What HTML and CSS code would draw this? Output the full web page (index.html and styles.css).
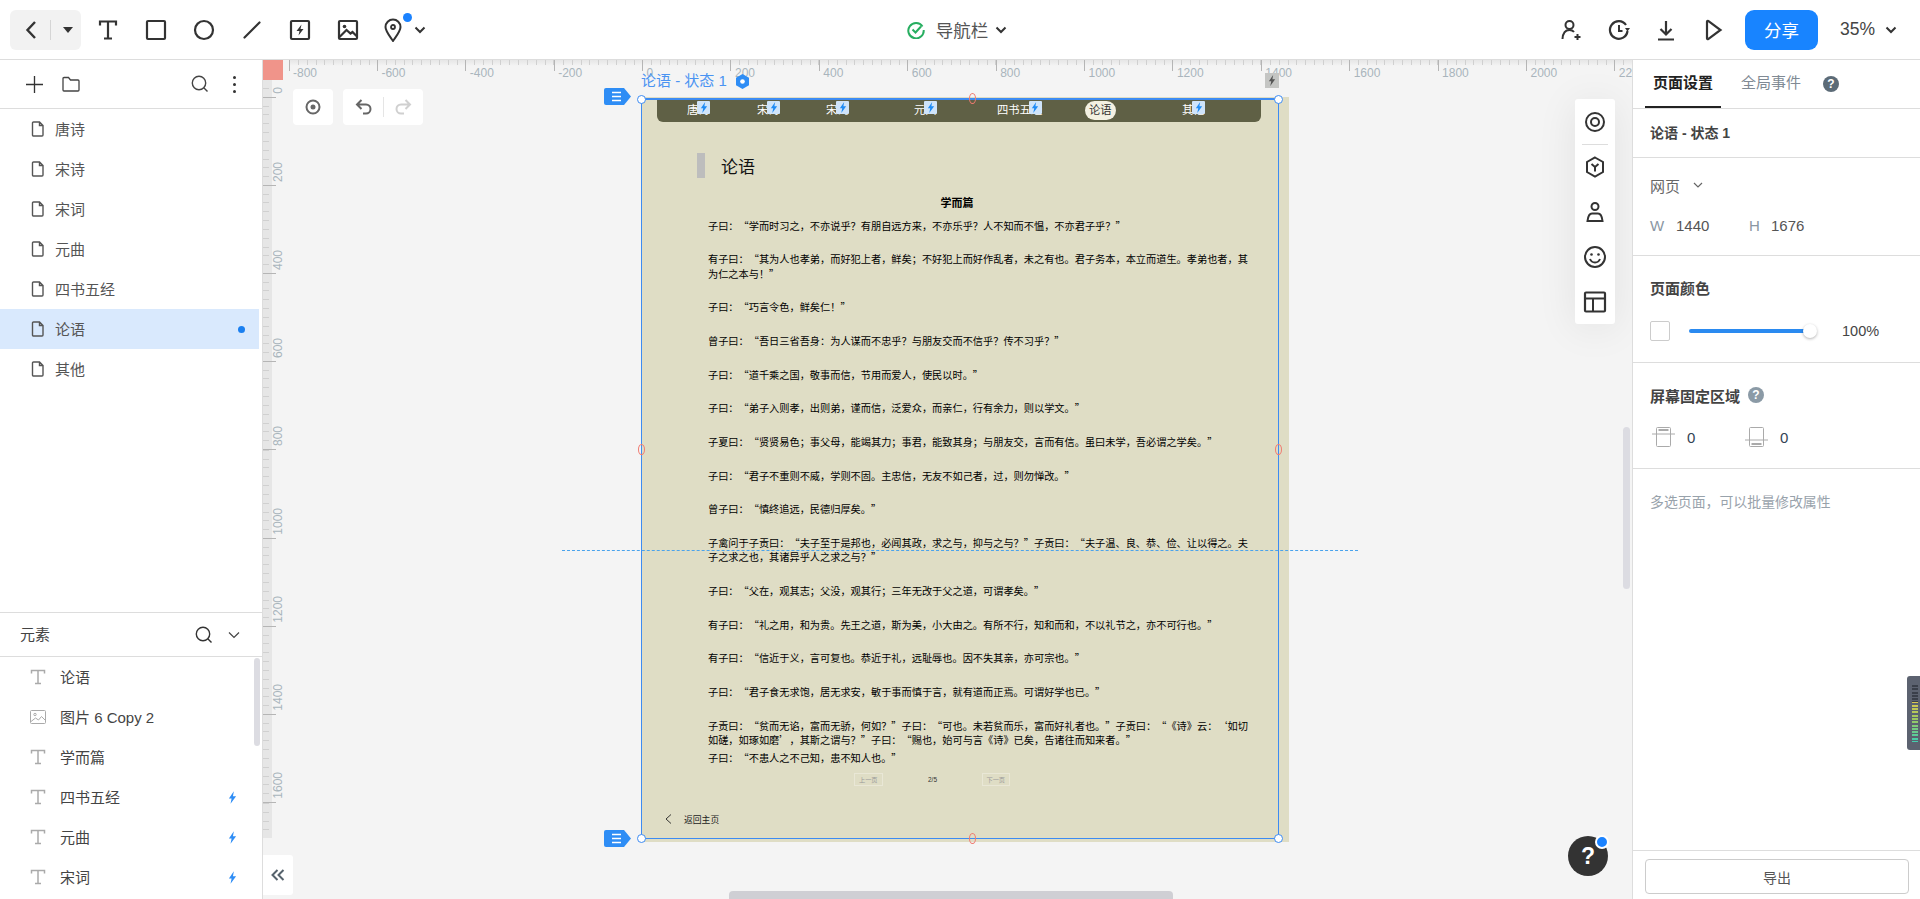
FILE: index.html
```html
<!DOCTYPE html>
<html lang="zh-CN">
<head>
    <meta charset="UTF-8">
    <meta name="viewport" content="width=device-width, initial-scale=1.0">
    <title>论语 - 状态 1</title>
    <link rel="stylesheet" href="styles.css">
</head>
<body>

<svg class="icon-defs" aria-hidden="true">
    <symbol id="i-file" viewBox="0 0 14 16"><path d="M2.5 1h6l3.500 3.500V14a1 1 0 0 1-1 1h-8.500a1 1 0 0 1-1-1V2a1 1 0 0 1 1-1zM8.500 1v3.500H12" fill="none" stroke="currentColor" stroke-width="1.400"/></symbol>
    <symbol id="i-t" viewBox="0 0 16 16"><path d="M1.500 4.500V1.500h13v3M8 1.500v13M5 14.500h6" fill="none" stroke="currentColor" stroke-width="1.500"/></symbol>
    <symbol id="i-bolt" viewBox="0 0 10 14"><path d="M6.500 0 1 8h3L2.800 14 9 5.500H5.500z" fill="currentColor"/></symbol>
    <symbol id="i-search" viewBox="0 0 18 18"><circle cx="8" cy="8" r="6.700" fill="none" stroke="currentColor" stroke-width="1.400"/><path d="m12.800 12.800 3.700 3.700" stroke="currentColor" stroke-width="1.400"/></symbol>
    <symbol id="i-chev" viewBox="0 0 12 8"><path d="m1.500 1.500 4.500 4.500 4.500-4.500" fill="none" stroke="currentColor" stroke-width="2"/></symbol>
    <symbol id="i-tag" viewBox="0 0 27 17"><path d="M2 0h18l7 8.500-7 8.500H2a2 2 0 0 1-2-2V2a2 2 0 0 1 2-2z" fill="#2e8df5"/><path d="M8 4.500h9M8 8.500h9M8 12.500h9" stroke="#fff" stroke-width="1.500"/></symbol>
</svg>

<!-- Top toolbar -->
<header class="topbar">
    <div class="topbar-left">
        <div class="back-group">
            <svg class="back-arrow" viewBox="0 0 12 20"><path d="M10 2 2.500 10l7.500 8" fill="none" stroke="#333" stroke-width="2.400"/></svg>
            <span class="back-sep"></span>
            <span class="back-caret"></span>
        </div>
        <span class="tool"><svg viewBox="0 0 24 24"><path d="M4 7.500V3.500h16v4M12 3.500v17M8 20.500h8" fill="none" stroke="#333" stroke-width="2.200"/></svg></span>
        <span class="tool"><svg viewBox="0 0 24 24"><rect x="3" y="3" width="18" height="18" rx="1" fill="none" stroke="#333" stroke-width="2.200"/></svg></span>
        <span class="tool"><svg viewBox="0 0 24 24"><circle cx="12" cy="12" r="9" fill="none" stroke="#333" stroke-width="2.200"/></svg></span>
        <span class="tool"><svg viewBox="0 0 24 24"><path d="M4.500 19.500 19.500 4.500" fill="none" stroke="#333" stroke-width="2.200" stroke-linecap="round"/></svg></span>
        <span class="tool"><svg viewBox="0 0 24 24"><rect x="3" y="3" width="18" height="18" rx="1" fill="none" stroke="#333" stroke-width="2.200"/><path d="M13.500 6.500 8.500 13h3l-1 4.500 5-6.500h-3z" fill="#333"/></svg></span>
        <span class="tool"><svg viewBox="0 0 24 24"><rect x="3" y="3" width="18" height="18" rx="1" fill="none" stroke="#333" stroke-width="2.200"/><circle cx="8.500" cy="8.500" r="1.800" fill="#333"/><path d="m3.500 19 7-7 4 3.500 2-1.500 4 4" fill="none" stroke="#333" stroke-width="2.200"/></svg></span>
        <span class="tool tool-pin">
            <svg viewBox="0 0 24 24"><path d="M12 23C7.500 16.500 4.500 13 4.500 9a7.500 7.500 0 0 1 15 0c0 4-3 7.500-7.500 14z" fill="none" stroke="#333" stroke-width="2"/><circle cx="12" cy="9" r="2" fill="none" stroke="#333" stroke-width="1.800"/></svg>
            <span class="pin-dot"></span>
        </span>
        <svg class="chev-small" viewBox="0 0 12 8"><use href="#i-chev"/></svg>
    </div>
    <div class="topbar-center">
        <svg class="status-check" viewBox="0 0 18 18"><path d="M15.500 5.500A7.700 7.700 0 1 0 16.700 9" fill="none" stroke="#27ae60" stroke-width="2"/><path d="m5.500 8.500 3 3 5.500-6" fill="none" stroke="#27ae60" stroke-width="2"/></svg>
        <span class="status-name">导航栏</span>
        <svg class="chev-small" viewBox="0 0 12 8"><use href="#i-chev"/></svg>
    </div>
    <div class="topbar-right">
        <span class="tool-r"><svg viewBox="0 0 24 24"><circle cx="10.500" cy="7" r="4" fill="none" stroke="#333" stroke-width="2"/><path d="M3.500 21c.3-5 2.500-9 7-9 2 0 3.500.7 4.500 2" fill="none" stroke="#333" stroke-width="2"/><path d="M15.500 19h6M18.500 16v6" stroke="#333" stroke-width="2"/></svg></span>
        <span class="tool-r"><svg viewBox="0 0 24 24"><path d="M20.500 13A8.800 8.800 0 1 1 19 7" fill="none" stroke="#333" stroke-width="2.200"/><path d="M12 7v6h3.500" fill="none" stroke="#333" stroke-width="2"/><path d="m23 10-2.500 3.500L18 10z" fill="#333"/></svg></span>
        <span class="tool-r"><svg viewBox="0 0 24 24"><path d="M12 3v13M6.500 11l5.500 5.500 5.500-5.500M4 21.500h16" fill="none" stroke="#333" stroke-width="2.200"/></svg></span>
        <span class="tool-r"><svg viewBox="0 0 24 24"><path d="M6 3.500v17a.8.800 0 0 0 1.200.6L19.500 12 7.200 2.900A.8.800 0 0 0 6 3.500z" fill="none" stroke="#333" stroke-width="2.200"/></svg></span>
        <button class="share-btn">分享</button>
        <span class="zoom-value">35%</span>
        <svg class="chev-small" viewBox="0 0 12 8"><use href="#i-chev"/></svg>
    </div>
</header>

<main class="workspace">

    <!-- Pages and elements -->
    <aside class="left-panel">
        <div class="panel-head">
            <svg class="head-plus" viewBox="0 0 18 18"><path d="M9 0v18M0 9h18" stroke="#333" stroke-width="1.400"/></svg>
            <svg class="head-folder" viewBox="0 0 18 16"><path d="M1 2.500a1 1 0 0 1 1-1h4.500l2 2.500H16a1 1 0 0 1 1 1v9a1 1 0 0 1-1 1H2a1 1 0 0 1-1-1z" fill="none" stroke="#444" stroke-width="1.300"/></svg>
            <svg class="head-search"><use href="#i-search"/></svg>
            <span class="head-dots"><i></i><i></i><i></i></span>
        </div>
        <ul class="page-list">
            <li class="page-row"><svg class="page-icon"><use href="#i-file"/></svg>唐诗</li>
            <li class="page-row"><svg class="page-icon"><use href="#i-file"/></svg>宋诗</li>
            <li class="page-row"><svg class="page-icon"><use href="#i-file"/></svg>宋词</li>
            <li class="page-row"><svg class="page-icon"><use href="#i-file"/></svg>元曲</li>
            <li class="page-row"><svg class="page-icon"><use href="#i-file"/></svg>四书五经</li>
            <li class="page-row is-active"><svg class="page-icon"><use href="#i-file"/></svg>论语<span class="active-dot"></span></li>
            <li class="page-row"><svg class="page-icon"><use href="#i-file"/></svg>其他</li>
        </ul>
        <div class="elements">
            <div class="elements-head">
                <span class="elements-name">元素</span>
                <svg class="el-search"><use href="#i-search"/></svg>
                <svg class="el-chev" viewBox="0 0 12 8"><path d="m1 1.500 5 5 5-5" fill="none" stroke="#444" stroke-width="1.200"/></svg>
            </div>
            <ul class="element-list">
                <li class="element-row"><svg class="el-icon"><use href="#i-t"/></svg>论语</li>
                <li class="element-row"><svg class="el-icon" viewBox="0 0 16 16"><rect x=".5" y="1.500" width="15" height="13" rx="1" fill="none" stroke="#aaa"/><circle cx="5" cy="5.500" r="1.200" fill="none" stroke="#aaa"/><path d="m1 12.500 4.500-3.500 3 2 3-3.500 4 4" fill="none" stroke="#aaa"/></svg>图片 6 Copy 2</li>
                <li class="element-row"><svg class="el-icon"><use href="#i-t"/></svg>学而篇</li>
                <li class="element-row"><svg class="el-icon"><use href="#i-t"/></svg>四书五经<svg class="el-bolt"><use href="#i-bolt"/></svg></li>
                <li class="element-row"><svg class="el-icon"><use href="#i-t"/></svg>元曲<svg class="el-bolt"><use href="#i-bolt"/></svg></li>
                <li class="element-row"><svg class="el-icon"><use href="#i-t"/></svg>宋词<svg class="el-bolt"><use href="#i-bolt"/></svg></li>
            </ul>
            <span class="element-scroll"></span>
        </div>
    </aside>

    <!-- Canvas with rulers -->
    <section class="canvas">
        <div class="ruler-top">
            <span class="ruler-corner"></span>
            <span class="rt-cell">-800</span><span class="rt-cell">-600</span><span class="rt-cell">-400</span><span class="rt-cell">-200</span>
            <span class="rt-cell">0</span><span class="rt-cell">200</span><span class="rt-cell">400</span><span class="rt-cell">600</span>
            <span class="rt-cell">800</span><span class="rt-cell">1000</span><span class="rt-cell">1200</span><span class="rt-cell">1400</span>
            <span class="rt-cell">1600</span><span class="rt-cell">1800</span><span class="rt-cell">2000</span><span class="rt-cell">22</span>
        </div>
        <div class="ruler-left">
            <span class="rl-cell rl-first"><b>0</b></span>
            <span class="rl-cell"><b>200</b></span><span class="rl-cell"><b>400</b></span><span class="rl-cell"><b>600</b></span>
            <span class="rl-cell"><b>800</b></span><span class="rl-cell"><b>1000</b></span><span class="rl-cell"><b>1200</b></span>
            <span class="rl-cell"><b>1400</b></span><span class="rl-cell"><b>1600</b></span>
            <span class="rl-cell rl-last"></span>
        </div>

        <!-- Artboard -->
        <div class="artboard">
            <nav class="site-nav">
                <span class="nav-item">唐诗<span class="nav-badge"><svg><use href="#i-bolt"/></svg></span></span>
                <span class="nav-item">宋诗<span class="nav-badge"><svg><use href="#i-bolt"/></svg></span></span>
                <span class="nav-item">宋词<span class="nav-badge"><svg><use href="#i-bolt"/></svg></span></span>
                <span class="nav-item">元曲<span class="nav-badge"><svg><use href="#i-bolt"/></svg></span></span>
                <span class="nav-item">四书五经<span class="nav-badge badge-wide"><svg><use href="#i-bolt"/></svg></span></span>
                <span class="nav-item nav-current">论语</span>
                <span class="nav-item">其他<span class="nav-badge"><svg><use href="#i-bolt"/></svg></span></span>
            </nav>
            <div class="book-head">
                <span class="book-mark"></span>
                <h1 class="book-title">论语</h1>
            </div>
            <article class="book-text">
                <h2 class="chapter-title">学而篇</h2>
                <p>子曰：“学而时习之，不亦说乎？有朋自远方来，不亦乐乎？人不知而不愠，不亦君子乎？”</p>
                <p>有子曰：“其为人也孝弟，而好犯上者，鲜矣；不好犯上而好作乱者，未之有也。君子务本，本立而道生。孝弟也者，其为仁之本与！”</p>
                <p>子曰：“巧言令色，鲜矣仁！”</p>
                <p>曾子曰：“吾日三省吾身：为人谋而不忠乎？与朋友交而不信乎？传不习乎？”</p>
                <p>子曰：“道千乘之国，敬事而信，节用而爱人，使民以时。”</p>
                <p>子曰：“弟子入则孝，出则弟，谨而信，泛爱众，而亲仁，行有余力，则以学文。”</p>
                <p>子夏曰：“贤贤易色；事父母，能竭其力；事君，能致其身；与朋友交，言而有信。虽曰未学，吾必谓之学矣。”</p>
                <p>子曰：“君子不重则不威，学则不固。主忠信，无友不如己者，过，则勿惮改。”</p>
                <p>曾子曰：“慎终追远，民德归厚矣。”</p>
                <p>子禽问于子贡曰：“夫子至于是邦也，必闻其政，求之与，抑与之与？”子贡曰：“夫子温、良、恭、俭、让以得之。夫子之求之也，其诸异乎人之求之与？”</p>
                <p>子曰：“父在，观其志；父没，观其行；三年无改于父之道，可谓孝矣。”</p>
                <p>有子曰：“礼之用，和为贵。先王之道，斯为美，小大由之。有所不行，知和而和，不以礼节之，亦不可行也。”</p>
                <p>有子曰：“信近于义，言可复也。恭近于礼，远耻辱也。因不失其亲，亦可宗也。”</p>
                <p>子曰：“君子食无求饱，居无求安，敏于事而慎于言，就有道而正焉。可谓好学也已。”</p>
                <p class="tight">子贡曰：“贫而无谄，富而无骄，何如？”子曰：“可也。未若贫而乐，富而好礼者也。”子贡曰：“《诗》云：‘如切如磋，如琢如磨’，其斯之谓与？”子曰：“赐也，始可与言《诗》已矣，告诸往而知来者。”</p>
                <p class="tight">子曰：“不患人之不己知，患不知人也。”</p>
            </article>
            <div class="pager">
                <span class="pager-btn">上一页</span>
                <span class="pager-count">2/5</span>
                <span class="pager-btn">下一页</span>
            </div>
            <div class="back-home">
                <svg viewBox="0 0 7 10"><path d="M6 .5 1 5l5 4.500" fill="none" stroke="#222" stroke-width=".9"/></svg>
                <span>返回主页</span>
            </div>
        </div>

        <!-- Selection frame over the artboard -->
        <div class="frame-label">论语 - 状态 1
            <svg viewBox="0 0 14 16"><path d="M7 0 14 4v8l-7 4-7-4V4z" fill="#2e8df5"/><circle cx="7" cy="8" r="2.500" fill="#fff"/></svg>
        </div>
        <span class="frame-bolt"><svg><use href="#i-bolt"/></svg></span>
        <svg class="frame-tag tag-top"><use href="#i-tag"/></svg>
        <svg class="frame-tag tag-bottom"><use href="#i-tag"/></svg>
        <div class="frame">
            <i class="handle h-tl"></i><i class="handle h-tr"></i><i class="handle h-bl"></i><i class="handle h-br"></i>
            <i class="mid m-top"></i><i class="mid m-bottom"></i><i class="mid m-left"></i><i class="mid m-right"></i>
        </div>
        <div class="guide-line"></div>

        <!-- Floating tools -->
        <div class="float-btn float-target">
            <svg viewBox="0 0 16 16"><circle cx="8" cy="8" r="6.500" fill="none" stroke="#666" stroke-width="2"/><circle cx="8" cy="8" r="2.500" fill="#666"/></svg>
        </div>
        <div class="float-btn float-history">
            <svg viewBox="0 0 18 18"><path d="M6.500 2 2 6.500 6.500 11M2.500 6.500H11a4.500 4.500 0 0 1 0 9H8" fill="none" stroke="#666" stroke-width="2"/></svg>
            <span class="history-sep"></span>
            <svg viewBox="0 0 18 18"><path d="M11.500 2 16 6.500 11.500 11M15.500 6.500H7a4.500 4.500 0 0 0 0 9h3" fill="none" stroke="#d0d0d0" stroke-width="2"/></svg>
        </div>
        <div class="side-tools">
            <svg viewBox="0 0 24 24"><circle cx="12" cy="12" r="9" fill="none" stroke="#333" stroke-width="2"/><circle cx="12" cy="12" r="4" fill="none" stroke="#333" stroke-width="2"/></svg>
            <span class="side-sep"></span>
            <svg viewBox="0 0 24 24"><path d="M12 2.500 20 7v10l-8 4.500L4 17V7z" fill="none" stroke="#333" stroke-width="2"/><path d="m8.500 9 3.500 3 3.500-3M12 12v4.500" fill="none" stroke="#333" stroke-width="2"/></svg>
            <svg viewBox="0 0 24 24"><circle cx="12" cy="6.500" r="3.500" fill="none" stroke="#333" stroke-width="2"/><path d="M4.500 21c.5-4.500 2-7.500 4.500-7.500h6c2.500 0 4 3 4.500 7.500z" fill="none" stroke="#333" stroke-width="2"/></svg>
            <svg viewBox="0 0 24 24"><circle cx="12" cy="12" r="10" fill="none" stroke="#333" stroke-width="2"/><circle cx="8.500" cy="9.500" r="1.300" fill="#333"/><circle cx="15.500" cy="9.500" r="1.300" fill="#333"/><path d="M7 14c1 2.500 3 3.500 5 3.500s4-1 5-3.500" fill="none" stroke="#333" stroke-width="2"/></svg>
            <svg viewBox="0 0 24 24"><rect x="2" y="2.500" width="20" height="19" rx="1" fill="none" stroke="#333" stroke-width="2.200"/><path d="M2 8.500h20M10 8.500V21" fill="none" stroke="#333" stroke-width="2"/></svg>
        </div>

        <span class="scroll-v"></span>
        <span class="scroll-h"></span>
        <div class="help-btn">?<span class="help-dot"></span></div>
        <button class="collapse-btn"><svg viewBox="0 0 14 12"><path d="M6.500 1 1.500 6l5 5M12.500 1l-5 5 5 5" fill="none" stroke="#56626c" stroke-width="2"/></svg></button>
    </section>

    <!-- Page settings -->
    <aside class="right-panel">
        <div class="tabs">
            <span class="tab is-on">页面设置</span>
            <span class="tab">全局事件</span>
            <span class="hint hint-dark">?</span>
        </div>
        <div class="sec sec-name">论语 - 状态 1</div>
        <div class="sec sec-size">
            <div class="page-type">网页<svg viewBox="0 0 12 8"><path d="m2 2 4 4 4-4" fill="none" stroke="#666" stroke-width="1.200"/></svg></div>
            <div class="size-row">
                <span class="size-field"><em>W</em>1440</span>
                <span class="size-field"><em class="em-h">H</em>1676</span>
            </div>
        </div>
        <div class="sec sec-color">
            <div class="sec-title">页面颜色</div>
            <div class="color-row">
                <span class="swatch"></span>
                <span class="slider"><span class="slider-thumb"></span></span>
                <span class="percent">100%</span>
            </div>
        </div>
        <div class="sec sec-fixed">
            <div class="sec-title">屏幕固定区域<span class="hint hint-light">?</span></div>
            <div class="fixed-row">
                <span class="fixed-field"><svg viewBox="0 0 23 20"><rect x="4.500" y=".5" width="14" height="19" rx="1" fill="#fff" stroke="#aaa"/><path d="M6.500 3h10" stroke="#aaa" stroke-width="2"/><path d="M0 7h23" stroke="#aaa"/></svg>0</span>
                <span class="fixed-field"><svg viewBox="0 0 23 20"><rect x="4.500" y=".5" width="14" height="19" rx="1" fill="#fff" stroke="#aaa"/><path d="M6.500 17h10" stroke="#aaa" stroke-width="2"/><path d="M0 13h23" stroke="#aaa"/></svg>0</span>
            </div>
        </div>
        <div class="multi-note">多选页面，可以批量修改属性</div>
        <div class="export-bar"><button class="export-btn">导出</button></div>
    </aside>
</main>

<div class="side-widget"><span class="meter"></span></div>

</body>
</html>
```

FILE: styles.css
```css
* {
    box-sizing: border-box;
}
html, body {
    height: 100%;
}
body {
    margin: 0;
    display: flex;
    flex-direction: column;
    overflow: hidden;
    position: relative;
    font-family: "Liberation Sans", "Noto Sans CJK SC", sans-serif;
    color: #444;
    background-color: #f4f4f4;
}
ul {
    list-style: none;
    margin: 0;
    padding: 0;
}
svg {
    display: block;
}
button {
    font-family: inherit;
    cursor: pointer;
}
.icon-defs {
    width: 0;
    height: 0;
    position: absolute;
}

/* top bar */
.topbar {
    height: 60px;
    flex: none;
    display: grid;
    grid-template-columns: 1fr auto 1fr;
    align-items: center;
    background-color: white;
    border-bottom: 1px solid #ddd;
}
.topbar-left, .topbar-center, .topbar-right {
    display: flex;
    align-items: center;
}
.topbar-left {
    padding-left: 10px;
}
.topbar-center {
    margin-right: 6px;
}
.topbar-right {
    justify-content: flex-end;
    padding-right: 23px;
}
.back-group {
    width: 71px;
    height: 40px;
    margin-right: 3px;
    display: flex;
    align-items: center;
    padding-left: 15px;
    background-color: #f2f2f2;
    border-radius: 6px;
}
.back-arrow {
    width: 12px;
    height: 20px;
}
.back-sep {
    width: 1px;
    height: 20px;
    margin: 0 12px 0 13px;
    background-color: #d5d5d5;
}
.back-caret {
    border-left: 5px solid transparent;
    border-right: 5px solid transparent;
    border-top: 6px solid #333;
}
.tool {
    width: 48px;
    display: flex;
    justify-content: center;
}
.tool svg {
    width: 24px;
    height: 24px;
}
.tool-pin {
    width: 42px;
    position: relative;
}
.pin-dot {
    position: absolute;
    top: -5px;
    left: 31px;
    width: 9px;
    height: 9px;
    border-radius: 50%;
    background-color: #1a82ff;
}
.chev-small {
    width: 12px;
    height: 8px;
    color: #333;
}
.status-check {
    width: 18px;
    height: 18px;
}
.status-name {
    margin: 0 7px 0 11px;
    font-size: 17.500px;
    color: #555;
}
.tool-r {
    width: 47.300px;
    display: flex;
    justify-content: center;
}
.tool-r svg {
    width: 24px;
    height: 24px;
}
.share-btn {
    width: 73px;
    height: 40px;
    margin: 0 22px 0 8px;
    border: none;
    border-radius: 9px;
    background-color: #1884ff;
    color: white;
    font-size: 17.500px;
}
.zoom-value {
    margin-right: 10px;
    font-size: 17.500px;
    color: #444;
}

/* main area */
.workspace {
    flex: 1;
    min-height: 0;
    display: flex;
}

/* left panel */
.left-panel {
    width: 263px;
    flex: none;
    display: flex;
    flex-direction: column;
    background-color: white;
    border-right: 1px solid #ddd;
}
.panel-head {
    height: 49px;
    flex: none;
    display: flex;
    align-items: center;
    padding-left: 26px;
    border-bottom: 1px solid #ddd;
}
.head-plus {
    width: 17px;
    height: 17px;
}
.head-folder {
    width: 18px;
    height: 16px;
    margin-left: 19px;
}
.head-search {
    width: 18px;
    height: 18px;
    margin-left: 111px;
}
.head-dots {
    margin-left: 24px;
    display: flex;
    flex-direction: column;
    gap: 4px;
}
.head-dots i {
    width: 3px;
    height: 3px;
    border-radius: 50%;
    background-color: #333;
}
.page-list {
    flex: 1;
}
.page-row {
    height: 40px;
    width: 259px;
    display: flex;
    align-items: center;
    padding: 0 0 2px 31px;
    font-size: 15px;
    color: #555;
}
.page-row.is-active {
    background-color: #d9e9fd;
}
.page-icon {
    width: 14px;
    height: 16px;
    margin: 2px 10px 0 0;
    color: #555;
}
.active-dot {
    width: 7px;
    height: 7px;
    margin: 2px 14px 0 auto;
    border-radius: 50%;
    background-color: #1a7ff0;
}
.elements {
    height: 287px;
    flex: none;
    position: relative;
    border-top: 1px solid #ddd;
}
.elements-head {
    height: 44px;
    display: flex;
    align-items: center;
    padding-left: 20px;
    border-bottom: 1px solid #ddd;
    font-size: 15px;
    color: #444;
}
.elements-name {
    margin-bottom: 2px;
}
.el-search {
    width: 18px;
    height: 18px;
    margin-left: 145px;
    color: #333;
}
.el-chev {
    width: 12px;
    height: 8px;
    margin-left: 15px;
}
.element-row {
    height: 40px;
    display: flex;
    align-items: center;
    padding: 0 0 2px 30px;
    font-size: 15px;
    color: #444;
}
.el-icon {
    width: 16px;
    height: 16px;
    margin: 2px 14px 0 0;
    color: #aaa;
}
.el-bolt {
    width: 9px;
    height: 13px;
    margin: 2px 25px 0 auto;
    color: #2e8df5;
}
.element-scroll {
    position: absolute;
    top: 45px;
    left: 254px;
    width: 6px;
    height: 88px;
    border-radius: 3px;
    background-color: #dcdce2;
}

/* canvas */
.canvas {
    flex: 1;
    min-width: 0;
    position: relative;
    overflow: hidden;
    background-color: #f4f4f4;
}
.ruler-top {
    height: 20px;
    display: flex;
    overflow: hidden;
}
.ruler-corner {
    width: 25.500px;
    flex: none;
    background: linear-gradient(#f0948a, #f0948a) 0 0 / 20px 20px no-repeat;
}
.rt-cell {
    width: 88.400px;
    flex: none;
    padding: 7px 0 0 4.500px;
    font-size: 12px;
    line-height: 13px;
    color: #a9b4bc;
    background:
        linear-gradient(#b5b5b5, #b5b5b5) 0 0 / 1px 11px no-repeat,
        repeating-linear-gradient(to right, #d0d0d0 0 1px, transparent 1px 8.840px) 0 0 / 100% 5px no-repeat,
        linear-gradient(#e6e6e6, #f4f4f4) 0 0 / 100% 6px no-repeat;
}
.rt-cell:last-child {
    width: 32px;
}
.ruler-left {
    width: 20px;
    display: flex;
    flex-direction: column;
}
.rl-cell {
    height: 88.200px;
    flex: none;
    display: flex;
    justify-content: flex-end;
    align-items: flex-end;
    padding-bottom: 4px;
    background:
        linear-gradient(#b5b5b5, #b5b5b5) 0 100% / 13px 1px no-repeat,
        repeating-linear-gradient(to top, #d0d0d0 0 1px, transparent 1px 8.820px) 0 0 / 6px 100% no-repeat,
        linear-gradient(#e6e6e6, #e6e6e6) 0 0 / 9px 100% no-repeat;
}
.rl-first {
    height: 17.700px;
}
.rl-last {
    height: 35px;
    background:
        repeating-linear-gradient(to bottom, #d0d0d0 0 1px, transparent 1px 8.820px) 0 0 / 6px 100% no-repeat,
        linear-gradient(#e6e6e6, #e6e6e6) 0 0 / 9px 100% no-repeat;
}
.rl-cell b {
    writing-mode: vertical-rl;
    transform: rotate(180deg);
    font-weight: normal;
    font-size: 12px;
    line-height: 10px;
    color: #a9b4bc;
}

/* artboard */
.artboard {
    position: absolute;
    left: 378px;
    top: 37px;
    width: 648px;
    height: 745px;
    padding-top: 1px;
    background-color: #dfddc5;
    color: #111;
}
.site-nav {
    width: 604px;
    height: 23.700px;
    margin-left: 16px;
    padding-left: 30px;
    display: grid;
    grid-template-columns: 70px 69px 88px 83px 87.500px 97.500px 1fr;
    align-items: center;
    background-color: #5f6045;
    border-radius: 0 0 6px 6px;
    font-size: 11.300px;
    color: white;
}
.nav-item {
    position: relative;
    justify-self: start;
    line-height: 19px;
    padding-top: 2px;
}
.nav-current {
    padding: 0 4.500px;
    border-radius: 10px;
    background-color: #f3f0e2;
    color: #333;
    margin-top: 2px;
}
.nav-badge {
    position: absolute;
    left: 10px;
    top: 2px;
    width: 13px;
    height: 13px;
    display: flex;
    align-items: center;
    justify-content: center;
    background-color: #cfe4fa;
    border-radius: 1px;
    color: #1f8cf5;
}
.nav-badge svg {
    width: 8px;
    height: 11px;
}
.badge-wide {
    left: 31.500px;
}
.book-head {
    display: flex;
    align-items: center;
    margin: 31.300px 0 0 56px;
}
.book-mark {
    width: 7.500px;
    height: 25px;
    background-color: #bdbdbd;
}
.book-title {
    margin: 0 0 0 16.500px;
    font-size: 17px;
    font-weight: normal;
    color: #111;
}
.book-text {
    width: 544px;
    margin: 17px 0 0 67px;
    font-family: "Noto Sans CJK SC", sans-serif;
    font-size: 10.200px;
    line-height: 14.300px;
    color: #000;
}
.book-text p {
    margin: 0 0 19.370px;
    text-spacing-trim: space-all;
    font-feature-settings: "chws" 0, "palt" 0;
}
.book-text p.tight {
    margin-bottom: 3.400px;
}
.chapter-title {
    width: 498px;
    margin: 0 0 9.500px;
    text-align: center;
    font-size: 11px;
    font-weight: bold;
}
.pager {
    display: flex;
    align-items: center;
    margin: 8.600px 0 0 213px;
    font-size: 6.200px;
    color: #999;
}
.pager-btn {
    width: 28.500px;
    height: 13px;
    display: flex;
    align-items: center;
    justify-content: center;
    border: 1px solid #e9e7d6;
}
.pager-count {
    width: 99px;
    padding-left: 45.500px;
    font-size: 6.500px;
    color: #333;
}
.back-home {
    display: flex;
    align-items: center;
    gap: 12px;
    margin: 26.500px 0 0 24px;
    font-size: 8.800px;
    color: #222;
}
.back-home svg {
    width: 7px;
    height: 10px;
}

/* selection frame */
.frame {
    position: absolute;
    left: 378px;
    top: 38px;
    width: 638px;
    height: 741px;
    border: 1px solid #3d8bf2;
    border-top-width: 2px;
}
.handle {
    position: absolute;
    width: 9px;
    height: 9px;
    border: 1px solid #3d8bf2;
    border-radius: 50%;
    background-color: white;
}
.h-tl { left: -5px; top: -5px; }
.h-tr { right: -5px; top: -5px; }
.h-bl { left: -5px; bottom: -5px; }
.h-br { right: -5px; bottom: -5px; }
.mid {
    position: absolute;
    width: 7px;
    height: 11px;
    border: 1px solid #f07a70;
    border-radius: 50%;
}
.m-top { left: 327px; top: -7px; }
.m-bottom { left: 327px; bottom: -6px; }
.m-left { left: -4px; top: 344px; }
.m-right { right: -4px; top: 344px; }
.frame-label {
    position: absolute;
    left: 378px;
    top: 12px;
    display: flex;
    align-items: center;
    gap: 9px;
    font-size: 15px;
    line-height: 18px;
    color: #4a93f2;
}
.frame-label svg {
    width: 13px;
    height: 15px;
}
.frame-bolt {
    position: absolute;
    left: 1001.500px;
    top: 12.700px;
    width: 14.500px;
    height: 15px;
    display: flex;
    align-items: center;
    justify-content: center;
    background-color: #c4c5c3;
    color: #555;
}
.frame-bolt svg {
    width: 8px;
    height: 11px;
}
.frame-tag {
    position: absolute;
    left: 341px;
    width: 27px;
    height: 17px;
}
.tag-top { top: 28px; }
.tag-bottom { top: 770px; }
.guide-line {
    position: absolute;
    left: 299px;
    top: 490px;
    width: 796px;
    border-top: 1px dashed #4aa3ec;
}

/* floating tools */
.float-btn {
    position: absolute;
    top: 29px;
    height: 36px;
    display: flex;
    align-items: center;
    justify-content: center;
    background-color: white;
    border-radius: 4px;
}
.float-target {
    left: 30px;
    width: 40px;
}
.float-target svg {
    width: 16px;
    height: 16px;
}
.float-history {
    left: 80px;
    width: 80px;
    gap: 10px;
}
.float-history svg {
    width: 18px;
    height: 18px;
}
.history-sep {
    width: 1px;
    height: 20px;
    background-color: #e5e5e5;
}
.side-tools {
    position: absolute;
    left: 1312px;
    top: 39px;
    width: 40px;
    height: 225px;
    display: flex;
    flex-direction: column;
    align-items: center;
    padding-top: 11px;
    background-color: white;
    border-radius: 3px;
    box-shadow: 0 4px 40px rgba(0, 0, 0, 0.08);
}
.side-tools svg {
    width: 24px;
    height: 24px;
    flex: none;
    margin-bottom: 21px;
}
.side-tools .side-sep {
    width: 26px;
    height: 1px;
    flex: none;
    margin: -11px 0 10px;
    background-color: #ddd;
}
.scroll-v {
    position: absolute;
    left: 1360px;
    top: 367px;
    width: 7px;
    height: 162px;
    border-radius: 4px;
    background-color: #dcdce2;
}
.scroll-h {
    position: absolute;
    left: 466px;
    bottom: 0;
    width: 444px;
    height: 8px;
    border-radius: 4px 4px 0 0;
    background-color: #cfcfd4;
}
.help-btn {
    position: absolute;
    left: 1305px;
    top: 776px;
    width: 40px;
    height: 40px;
    border-radius: 50%;
    background-color: #333;
    color: white;
    font-size: 23px;
    font-weight: bold;
    line-height: 40px;
    text-align: center;
}
.help-dot {
    position: absolute;
    right: -1px;
    top: -1px;
    width: 14px;
    height: 14px;
    border: 2px solid white;
    border-radius: 50%;
    background-color: #1a82ff;
}
.collapse-btn {
    position: absolute;
    left: 0;
    top: 795px;
    width: 30px;
    height: 40px;
    padding: 0;
    border: none;
    border-radius: 0 3px 3px 0;
    background-color: white;
    display: flex;
    align-items: center;
    justify-content: center;
}
.collapse-btn svg {
    width: 14px;
    height: 12px;
}

/* right panel */
.right-panel {
    width: 288px;
    flex: none;
    display: flex;
    flex-direction: column;
    background-color: white;
    border-left: 1px solid #ddd;
}
.tabs {
    height: 49px;
    flex: none;
    display: flex;
    align-items: center;
    padding-left: 12px;
    border-bottom: 1px solid #ddd;
}
.tab {
    height: 48px;
    line-height: 46px;
    padding: 0 8px;
    margin-right: 20px;
    font-size: 15px;
    color: #808a94;
}
.tab.is-on {
    margin-right: 12px;
    color: #222;
    font-weight: bold;
    border-bottom: 2px solid #222;
}
.hint {
    width: 16px;
    height: 16px;
    border-radius: 50%;
    color: white;
    font-size: 12px;
    font-weight: bold;
    line-height: 16px;
    text-align: center;
}
.hint-dark {
    background-color: #5c6b77;
    margin-left: -6px;
}
.hint-light {
    display: inline-block;
    margin-left: 8px;
    background-color: #8b9aa6;
}
.sec {
    padding-left: 17px;
    border-bottom: 1px solid #ddd;
    flex: none;
}
.sec-name {
    height: 49px;
    line-height: 48px;
    font-size: 14px;
    font-weight: bold;
    color: #444;
}
.sec-size {
    height: 98px;
    padding-top: 17px;
}
.page-type {
    display: flex;
    align-items: center;
    height: 20px;
    font-size: 15px;
    color: #666;
}
.page-type svg {
    width: 12px;
    height: 8px;
    margin-left: 12px;
}
.size-row {
    display: flex;
    margin-top: 20px;
    height: 20px;
    align-items: center;
    font-size: 15px;
    color: #555;
}
.size-field {
    width: 99px;
    display: flex;
}
.size-field em {
    width: 26px;
    font-style: normal;
    color: #8a97a3;
}
.size-field .em-h {
    width: 22px;
}
.sec-color {
    height: 107px;
    padding-top: 21px;
}
.sec-title {
    display: flex;
    align-items: center;
    height: 20px;
    font-size: 15px;
    font-weight: bold;
    color: #444;
}
.color-row {
    display: flex;
    align-items: center;
    margin-top: 24px;
}
.swatch {
    width: 20px;
    height: 20px;
    border: 1px solid #ccc;
    border-radius: 2px;
}
.slider {
    width: 121px;
    height: 4px;
    margin-left: 19px;
    position: relative;
    border-radius: 2px;
    background-color: #2a8af0;
}
.slider-thumb {
    position: absolute;
    right: -7px;
    top: -5px;
    width: 14px;
    height: 14px;
    border-radius: 50%;
    background-color: white;
    box-shadow: 0 1px 3px rgba(0, 0, 0, 0.3);
}
.percent {
    margin-left: 32px;
    font-size: 14.500px;
    color: #444;
}
.sec-fixed {
    height: 106px;
    padding-top: 22px;
}
.fixed-row {
    display: flex;
    margin-top: 22px;
    padding-left: 2px;
}
.fixed-field {
    width: 93px;
    display: flex;
    align-items: center;
    gap: 12px;
    font-size: 15px;
    color: #345;
}
.fixed-field svg {
    width: 23px;
    height: 20px;
}
.multi-note {
    padding: 23px 0 0 17px;
    font-size: 13.900px;
    line-height: 20px;
    color: #98a2ab;
}
.export-bar {
    margin-top: auto;
    height: 49px;
    padding: 8px 11px 0 12px;
    border-top: 1px solid #ddd;
}
.export-btn {
    width: 100%;
    height: 35px;
    border: 1px solid #ccc;
    border-radius: 4px;
    background-color: white;
    font-size: 14px;
    color: #555;
}

/* extension widget at the window edge */
.side-widget {
    position: absolute;
    left: 1907px;
    top: 676px;
    width: 13px;
    height: 74px;
    padding: 9px 2px 8px 5px;
    background-color: #5c6270;
    border-radius: 3px 0 0 3px;
}
.meter {
    display: block;
    height: 100%;
    background:
        repeating-linear-gradient(to bottom, transparent 0 2px, #5c6270 2px 3.300px),
        linear-gradient(#3a3f4a 0 30%, #d8c850 30%, #9cc860 60%, #40d0b0 100%);
}
```
